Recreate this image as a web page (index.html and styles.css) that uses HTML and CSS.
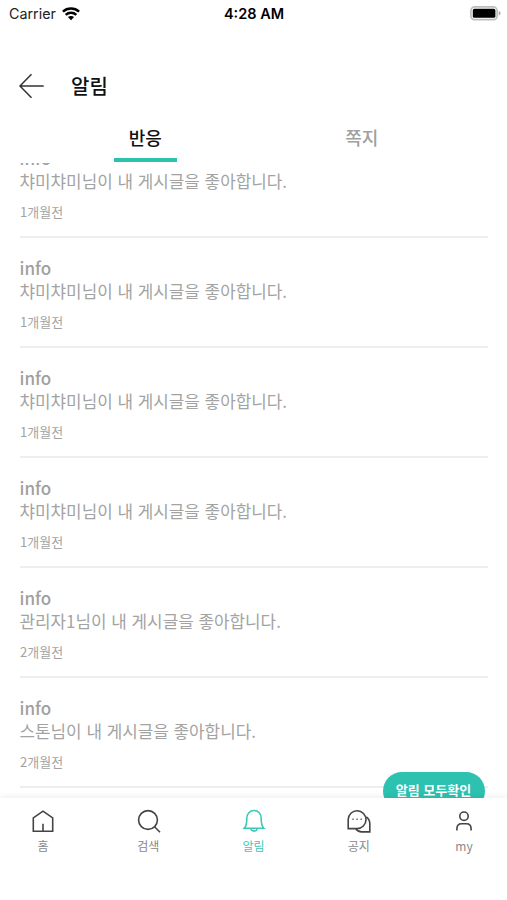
FILE: index.html
```html
<!DOCTYPE html>
<html lang="ko">
<head>
<meta charset="utf-8">
<meta name="viewport" content="width=device-width, initial-scale=1">
<title>알림</title>
<link rel="stylesheet" href="styles.css">
</head>
<body>
<div class="screen">
  <div class="status">
    <div class="carrier"><span>Carrier</span>
      <svg width="18" height="14" viewBox="0 0 18 14" fill="none" stroke="#000" stroke-width="2.5"><path d="M.9 4.7C5.4.5 12.6.5 17.1 4.7M3.7 7.8c3-2.8 7.6-2.8 10.6 0"/><path d="M5.9 10.1c1.8-1.6 4.4-1.6 6.2 0L9 13.3z" fill="#000" stroke="none"/></svg>
    </div>
    <div class="clock">4:28 AM</div>
    <svg class="battery" width="31" height="15" viewBox="0 0 31 15"><rect x=".9" y=".9" width="26.2" height="12.8" rx="3.8" fill="#fff" stroke="#bdbdbd" stroke-width="1.7"/><rect x="2.8" y="2.8" width="22.6" height="9" rx="1.6"/><path d="M28.7 5.1c2.4.7 2.4 3.8 0 4.5z" fill="#aaa"/></svg>
  </div>
  <header class="header">
    <svg width="26" height="26" viewBox="0 0 26 26" fill="none" stroke="#333" stroke-width="1.5"><path d="M13.5 1.2 2 13l11.5 11.8M2 13h23.7"/></svg>
    <h1>알림</h1>
  </header>
  <nav class="tabs">
    <div class="tab active"><span>반응</span></div>
    <div class="tab"><span>쪽지</span></div>
  </nav>
  <main class="feed">
    <ul class="list">
      <li><strong>info</strong><p>챠미챠미님이 내 게시글을 좋아합니다.</p><time>1개월전</time></li>
      <li><strong>info</strong><p>챠미챠미님이 내 게시글을 좋아합니다.</p><time>1개월전</time></li>
      <li><strong>info</strong><p>챠미챠미님이 내 게시글을 좋아합니다.</p><time>1개월전</time></li>
      <li><strong>info</strong><p>챠미챠미님이 내 게시글을 좋아합니다.</p><time>1개월전</time></li>
      <li><strong>info</strong><p>관리자1님이 내 게시글을 좋아합니다.</p><time>2개월전</time></li>
      <li><strong>info</strong><p>스톤님이 내 게시글을 좋아합니다.</p><time>2개월전</time></li>
    </ul>
    <div class="read-all">알림 모두확인</div>
  </main>
  <nav class="bottom">
    <div class="item"><svg viewBox="0 0 26 26"><path d="M3.3 23.2V9.9L13 3.2l9.7 6.7v13.3zM13 23.2v-7.4"/></svg><span>홈</span></div>
    <div class="item"><svg viewBox="0 0 26 26"><circle cx="12" cy="12" r="9.4"/><path d="m18.6 18.8 5.4 5.4"/></svg><span>검색</span></div>
    <div class="item on"><svg viewBox="0 0 26 26"><path d="M3.2 20.3c2-2 2.6-4 2.6-9.900 0-4.700 3-7.900 7.200-7.900s7.200 3.200 7.200 7.900c0 5.900.6 7.900 2.600 9.900zM9.900 20.500c.4 3.500 5.800 3.500 6.200 0"/></svg><span>알림</span></div>
    <div class="item"><svg viewBox="0 0 26 26"><path d="M2.200 20.600V11.500a8.900 8.900 0 1 1 8.900 9.100zM20.300 8.800c2.300 1.700 3.500 4 3.500 6.700v8.400h-8.200c-2.600 0-4.600-1.200-5.900-3.100"/><path class="dots" d="M6.200 11.200h1.600M10.300 11.200h1.600M14.400 11.200H16"/></svg><span>공지</span></div>
    <div class="item"><svg viewBox="0 0 26 26"><circle cx="13" cy="8.200" r="4.200"/><path d="M5.900 22.500v-1.800c0-3 2-4.900 4.700-4.900h4.800c2.700 0 4.700 1.900 4.700 4.900v1.800"/></svg><span>my</span></div>
  </nav>
</div>
</body>
</html>
```
FILE: styles.css
```css
* { box-sizing: border-box; margin: 0; padding: 0; }
body { background: #fff; font-family: "Noto Sans CJK KR", sans-serif; color: #222; }
.screen { width: 507px; height: 900px; display: flex; flex-direction: column; overflow: hidden; background: #fff; }
.status { height: 28px; padding: 0 6px 0 9px; display: grid; grid-template-columns: 1fr auto 1fr; align-items: center; font: 400 14px/28px Inter, sans-serif; color: #222; }
.carrier { display: flex; align-items: center; gap: 6px; font-size: 14.3px; }
.carrier svg { margin-top: -1px; }
.clock { font-weight: 600; font-size: 14.5px; color: #000; margin-left: -2px; }
.battery { justify-self: end; margin-top: -1px; }
.header { height: 92px; padding: 23px 18px 0; display: flex; gap: 27px; }
.header svg { margin-top: 22px; }
h1 { font-size: 20px; line-height: 30px; font-weight: 500; margin-top: 20px; color: #111; }
.tabs { height: 43px; padding: 0 37px; display: flex; flex: none; }
.tab { flex: 1; display: flex; justify-content: center; font-size: 18px; line-height: 35px; font-weight: 500; color: #a0a0a0; }
.tab span { height: 42px; width: 63px; text-align: center; }
.tab.active { color: #111; }
.tab.active span { border-bottom: 4px solid #2dc1b0; }
.feed { height: 635px; flex: none; overflow: hidden; position: relative; padding: 0 19px 0 20px; }
.list { list-style: none; margin-top: -35px; }
.list li { height: 110px; padding-top: 18px; border-bottom: 2px solid #eee; color: #a3a3a3; }
.list strong { display: block; font-size: 17px; line-height: 23px; font-weight: 500; color: #a0a0a0; margin-left: -.5px; }
.list p { font-size: 16.9px; line-height: 24px; font-weight: 400; margin-left: -.5px; }
.list time { display: block; margin-top: 9px; font-size: 13px; line-height: 20px; }
.read-all { position: absolute; right: 22px; top: 609px; width: 102px; height: 38px; border-radius: 19px; background: #2dc1b0; color: #fff; padding-right: 1px; text-align: center; font-size: 13px; line-height: 35px; font-weight: 700; }
.bottom { flex: 1; position: relative; display: flex; justify-content: space-between; padding: 10px 17px 0 17px; background: #fff; box-shadow: 0 -1px 7px rgba(0,0,0,.07); }
.item { width: 52px; display: flex; flex-direction: column; align-items: center; font-size: 12px; line-height: 18px; color: #888; }
.item svg { width: 26px; height: 26px; fill: none; stroke: #444; stroke-width: 1.6; }
.item span { margin-top: 3px; }
.item:nth-child(2) svg { margin-left: 2px; }
.item .dots { stroke: #777; stroke-width: 1.5; }
.item.on { color: #3cc8b7; }
.item.on svg { stroke: #3cc8b7; }
```
